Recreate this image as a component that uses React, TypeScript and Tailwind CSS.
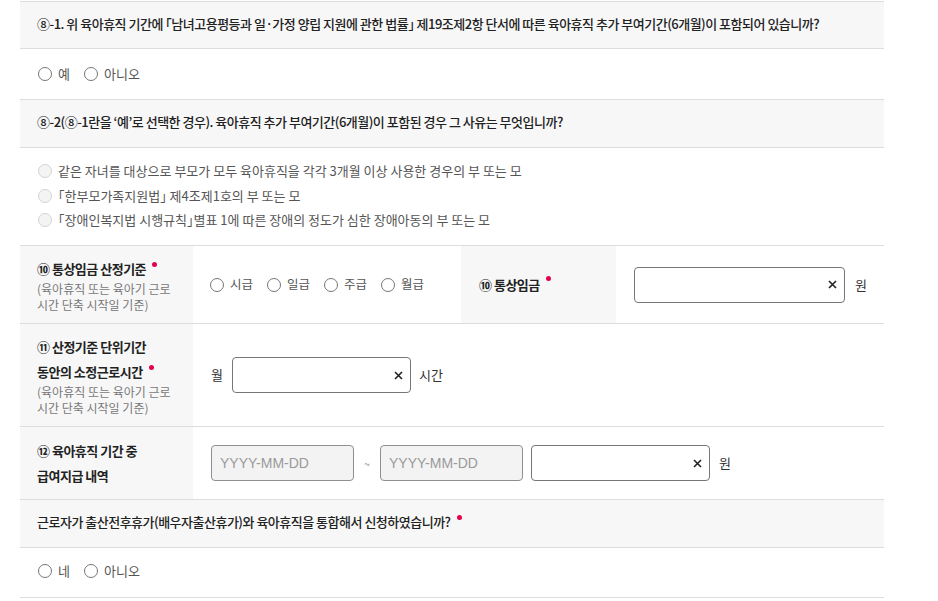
import React from "react"

const font = { fontFamily: '"Noto Sans CJK KR", "Noto Sans", sans-serif' }

function Radio({ label, disabled }: { label: string; disabled?: boolean }) {
  return (
    <label className="flex items-center gap-[6px]">
      <span
        className={
          disabled
            ? "h-[14px] w-[14px] shrink-0 rounded-full border border-[#d3d3d3] bg-[#f4f4f4]"
            : "h-[14px] w-[14px] shrink-0 rounded-full border border-[#767676] bg-white"
        }
      />
      <span className="text-[#555]">{label}</span>
    </label>
  )
}

function Dot() {
  return <span className="ml-[6px] inline-block h-[5px] w-[5px] -translate-y-[6px] rounded-full bg-[#e6004c] align-middle" />
}

function ClearInput({ w }: { w: string }) {
  return (
    <div className={`flex h-[36px] ${w} items-center justify-end rounded-[4px] border border-[#767676] bg-white pr-[7px]`}>
      <svg width="9" height="9" viewBox="0 0 9 9" className="text-[#222]">
        <path d="M1 1L8 8M8 1L1 8" stroke="currentColor" strokeWidth="1.6" />
      </svg>
    </div>
  )
}

function DateBox() {
  return (
    <div
      className="flex h-[36px] w-[143px] items-center rounded-[4px] border border-[#8f8f8f] bg-[#f3f3f3] pl-[8px] text-[14px] tracking-normal text-[#9a9a9a]"
      style={{ fontFamily: '"Liberation Sans", Arial, sans-serif' }}
    >
      YYYY-MM-DD
    </div>
  )
}

function Header({ children, h }: { children: React.ReactNode; h: string }) {
  return (
    <div className={`flex ${h} items-center border-b border-[#dddddd] bg-[#f7f7f7] px-[17px] pb-[3px] text-[13px] font-medium tracking-[-0.5px] text-[#222]`}>
      <span>{children}</span>
    </div>
  )
}

export default function App() {
  return (
    <div className="min-h-screen bg-white pt-px [font-feature-settings:'halt']" style={font}>
      <div className="ml-[20px] w-[864px] border-t border-[#dddddd] text-[12px] break-keep">
        <Header h="h-[47px]">
          ⑧-1. 위 육아휴직 기간에 「남녀고용평등과 일·가정 양립 지원에 관한 법률」 제19조제2항 단서에 따른 육아휴직 추가 부여기간(6개월)이 포함되어 있습니까?
        </Header>
        <div className="flex h-[51px] items-center gap-[14px] border-b border-[#dddddd] px-[18px] pb-[1px] text-[13px]">
          <Radio label="예" />
          <Radio label="아니오" />
        </div>
        <Header h="h-[48px]">
          ⑧-2(⑧-1란을 ‘예’로 선택한 경우). 육아휴직 추가 부여기간(6개월)이 포함된 경우 그 사유는 무엇입니까?
        </Header>
        <div className="flex h-[98px] flex-col justify-center gap-[6.5px] border-b border-[#dddddd] px-[18px] pb-[2px] text-[13px] leading-[18px]">
          <Radio disabled label="같은 자녀를 대상으로 부모가 모두 육아휴직을 각각 3개월 이상 사용한 경우의 부 또는 모" />
          <Radio disabled label="「한부모가족지원법」 제4조제1호의 부 또는 모" />
          <Radio disabled label="「장애인복지법 시행규칙」별표 1에 따른 장애의 정도가 심한 장애아동의 부 또는 모" />
        </div>

        {/* 10 */}
        <div className="flex h-[78px] border-b border-[#dddddd]">
          <div className="flex w-[173px] shrink-0 flex-col justify-center bg-[#f7f7f7] pl-[17px] pr-[14px]">
            <div className="text-[13px] font-bold leading-[25px] tracking-[-0.5px] text-[#222]">
              ⑩ 통상임금 산정기준
              <Dot />
            </div>
            <div className="leading-[16px] text-[#777]">(육아휴직 또는 육아기 근로 시간 단축 시작일 기준)</div>
          </div>
          <div className="flex w-[268px] items-center gap-[14px] pl-[17px] text-[12.5px]">
            <Radio label="시급" />
            <Radio label="일급" />
            <Radio label="주급" />
            <Radio label="월급" />
          </div>
          <div className="flex w-[155px] items-center bg-[#f7f7f7] pl-[18px] text-[13px] font-bold tracking-[-0.5px] text-[#222]">
            ⑩ 통상임금
            <Dot />
          </div>
          <div className="flex items-center gap-[10px] pl-[18px] text-[13px] text-[#333]">
            <ClearInput w="w-[211px]" />
            <span>원</span>
          </div>
        </div>

        {/* 11 */}
        <div className="flex h-[103px] border-b border-[#dddddd]">
          <div className="flex w-[173px] shrink-0 flex-col justify-center bg-[#f7f7f7] pl-[17px] pr-[14px]">
            <div className="text-[13px] font-bold leading-[25px] tracking-[-0.5px] text-[#222]">⑪ 산정기준 단위기간</div>
            <div className="text-[13px] font-bold leading-[25px] tracking-[-0.5px] text-[#222]">
              동안의 소정근로시간
              <Dot />
            </div>
            <div className="leading-[16px] text-[#777]">(육아휴직 또는 육아기 근로 시간 단축 시작일 기준)</div>
          </div>
          <div className="flex items-center gap-[8px] pl-[18px] text-[13px] text-[#333]">
            <span className="mr-[1px]">월</span>
            <ClearInput w="w-[179px]" />
            <span>시간</span>
          </div>
        </div>

        {/* 12 */}
        <div className="flex h-[73px] border-b border-[#dddddd]">
          <div className="flex w-[173px] shrink-0 flex-col justify-center bg-[#f7f7f7] pl-[17px] pr-[14px]">
            <div className="text-[13px] font-bold leading-[25px] tracking-[-0.5px] text-[#222]">⑫ 육아휴직 기간 중</div>
            <div className="text-[13px] font-bold leading-[25px] tracking-[-0.5px] text-[#222]">급여지급 내역</div>
          </div>
          <div className="flex items-center pl-[18px] text-[13px] text-[#333]">
            <DateBox />
            <span className="w-[26px] text-center text-[10px] text-[#888]">~</span>
            <DateBox />
            <div className="ml-[8px]">
              <ClearInput w="w-[179px]" />
            </div>
            <span className="ml-[9px]">원</span>
          </div>
        </div>

        <Header h="h-[48px]">
          근로자가 출산전후휴가(배우자출산휴가)와 육아휴직을 통합해서 신청하였습니까?
          <Dot />
        </Header>
        <div className="flex h-[50px] items-center gap-[14px] border-b border-[#dddddd] px-[18px] pb-[4px] text-[13px]">
          <Radio label="네" />
          <Radio label="아니오" />
        </div>
      </div>
    </div>
  )
}
